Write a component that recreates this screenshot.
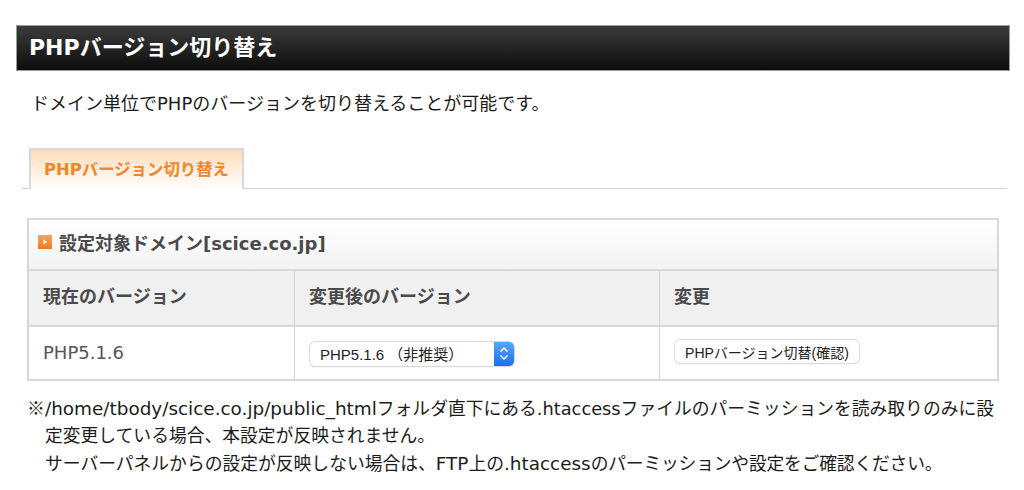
<script>
</script>

<main class="page">
  <h1 class="title">PHPバージョン切り替え</h1>
  <p class="lead">ドメイン単位でPHPのバージョンを切り替えることが可能です。</p>
  <div class="tabs"><div class="tab">PHPバージョン切り替え</div></div>

  <section class="panel">
    <h2 class="domain">
      <svg class="mark" viewBox="0 0 14 14" width="14" height="14" aria-hidden="true">
        <defs>
          <linearGradient id="markFill" x1="0" y1="0" x2="0" y2="1">
            <stop offset="0" stop-color="#f9a45a" />
            <stop offset="1" stop-color="#f07a1c" />
          </linearGradient>
        </defs>
        <rect width="14" height="14" fill="url(#markFill)" />
        <path d="M5.500 4.500l3.500 2.500-3.500 2.500z" fill="#fff" />
      </svg>
      <span>設定対象ドメイン[scice.co.jp]</span>
    </h2>
    <div class="grid">
      <div class="cell head">現在のバージョン</div>
      <div class="cell head">変更後のバージョン</div>
      <div class="cell head last">変更</div>
      <div class="cell body current">PHP5.1.6</div>
      <div class="cell body">
        <div class="select">
          <span class="select-text">PHP5.1.6 （非推奨）</span>
          <span class="stepper">
            <svg viewBox="0 0 20 23" width="20" height="23" aria-hidden="true">
              <path d="M6.500 9.500L10 6l3.500 3.500M6.500 13.500L10 17l3.500-3.500" fill="none" stroke="#fff" stroke-width="1.500" />
            </svg>
          </span>
        </div>
      </div>
      <div class="cell body last"><button class="confirm" type="button">PHPバージョン切替(確認)</button></div>
    </div>
  </section>

  <div class="notes">
    <p><span class="ref">※</span><span class="lat">/home/tbody/scice.co.jp/public_html</span>フォルダ直下にある.htaccessファイルのパーミッションを読み取りのみに設</p>
    <p class="note">定変更している場合、本設定が反映されません。</p>
    <p class="note">サーバーパネルからの設定が反映しない場合は、<span class="lat">FTP</span>上の<span class="lat">.htaccess</span><span class="tail">のパーミッションや設定をご確認ください。</span></p>
  </div>
</main>

<style>
  :global(body) {
    margin: 0;
    background: #fff;
  }
  .page {
    width: 1024px;
    height: 490px;
    overflow: hidden;
    box-sizing: border-box;
    padding: 25px 14px 0 16px;
    font-family: "DejaVu Sans", "Noto Sans CJK JP", sans-serif;
    color: #222;
  }
  .title {
    margin: 0;
    height: 46px;
    box-sizing: border-box;
    padding-left: 12px;
    border: 1px solid #9a9a9a;
    background: linear-gradient(#3c3c3c, #0c0c0c);
    color: #fff;
    font-size: 22px;
    font-weight: 700;
    line-height: 44px;
    white-space: nowrap;
  }
  .lead {
    margin: 20px 0 0 15px;
    font-size: 18px;
    line-height: 26px;
    color: #1c1c1c;
    white-space: nowrap;
  }
  .tabs {
    margin: 31px 3px 0 6px;
    padding-left: 7px;
    height: 41px;
    box-sizing: border-box;
    border-bottom: 1px solid #d4d4d4;
  }
  .tab {
    width: 215px;
    height: 41px;
    box-sizing: border-box;
    border: 2px solid #d8d8d8;
    border-bottom: 0;
    background: linear-gradient(#fddcbc, #fff);
    color: #f58426;
    font-size: 16.400px;
    font-weight: 700;
    line-height: 39px;
    text-align: center;
    white-space: nowrap;
  }
  .panel {
    margin: 29px 11px 0 11px;
    border: 2px solid #d8d8d8;
    border-bottom-width: 1px;
  }
  .domain {
    margin: 0;
    height: 51px;
    box-sizing: border-box;
    display: flex;
    align-items: center;
    gap: 7px;
    padding: 0 0 5px 9px;
    border-bottom: 2px solid #d8d8d8;
    background: linear-gradient(#fff, #f3f3f3);
    color: #4a4a4a;
    font-size: 18px;
    font-weight: 700;
    white-space: nowrap;
  }
  .grid {
    display: grid;
    grid-template-columns: 266px 365px 1fr;
  }
  .cell {
    box-sizing: border-box;
    display: flex;
    align-items: center;
    border-right: 1px solid #d4d4d4;
    padding-left: 14px;
  }
  .cell.last {
    border-right: 0;
  }
  .head {
    height: 56px;
    padding-bottom: 6px;
    border-bottom: 2px solid #d8d8d8;
    background: #f0f0f0;
    color: #4a4a4a;
    font-size: 18px;
    font-weight: 700;
  }
  .body {
    height: 53px;
    border-bottom: 1px solid #d8d8d8;
  }
  .current {
    color: #555;
    font-size: 18px;
    padding-bottom: 2px;
  }
  .select {
    display: flex;
    width: 204px;
    height: 24px;
    box-sizing: border-box;
    margin: 1px 0 0 1px;
    border-radius: 5px;
    background: #fff;
    box-shadow: 0 0 0 1px #d9d9d9, 0 1px 1px #bdbdbd;
    overflow: hidden;
    font-family: "Liberation Sans", "Noto Sans CJK JP", sans-serif;
    font-size: 15px;
    color: #222;
  }
  .select-text {
    flex: 1;
    padding-left: 10px;
    line-height: 25px;
    white-space: pre;
  }
  .stepper {
    width: 20px;
    display: flex;
    background: linear-gradient(#5ba4f8, #1671ef);
  }
  .confirm {
    margin: -3px 0 0 1px;
    padding: 0;
    width: 184px;
    height: 23px;
    border: 0;
    border-radius: 5px;
    background: #fff;
    box-shadow: 0 0 0 1px #dcdcdc, 0 1px 1px #c4c4c4;
    font-family: "Liberation Sans", "Noto Sans CJK JP", sans-serif;
    font-size: 14px;
    color: #222;
    white-space: nowrap;
  }
  .notes {
    margin: 12.500px 0 0 11px;
    font-size: 17.800px;
    line-height: 27.500px;
    color: #1c1c1c;
    white-space: nowrap;
  }
  .notes p {
    margin: 0;
  }
  .ref {
    font-family: "Noto Sans CJK JP", sans-serif;
    display: inline-block;
    width: 18px;
  }
  .lat {
    font-size: 18.400px;
  }
  .tail {
    letter-spacing: -0.200px;
  }
  .note {
    padding-left: 18px;
  }
</style>
